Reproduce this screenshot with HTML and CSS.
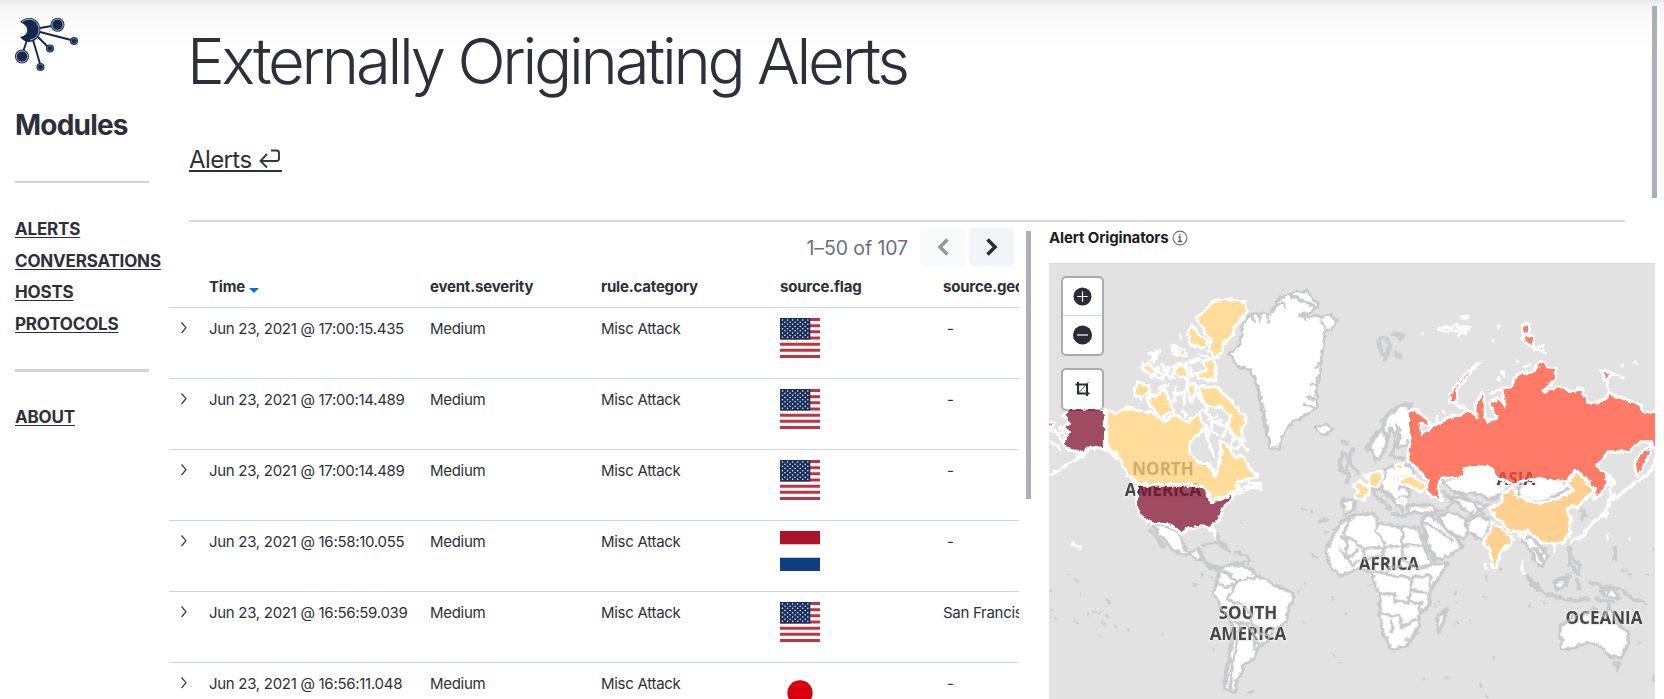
FILE: index.html
```
<!DOCTYPE html>
<html lang="en">
<head>
<meta charset="utf-8">
<title>Externally Originating Alerts</title>
<link rel="stylesheet" href="styles.css">
</head>
<body>
<svg width="0" height="0" class="defs" aria-hidden="true">
  <defs>
    <symbol id="flag-us" viewBox="0 0 120 120">
      <path fill="#fff" d="M0 0h120v120H0z"/>
      <path stroke="#bf3440" stroke-width="9.23" d="M0 4.6h120M0 23.1h120M0 41.5h120M0 60h120M0 78.5h120M0 96.9h120M0 115.4h120"/>
      <path fill="#19305c" d="M0 0h91v64.6H0z"/>
      <path stroke="#fff" stroke-width="4.4" stroke-linecap="round" stroke-dasharray="0 15.2" d="M7.5 6h80M7.5 19h80M7.5 32h80M7.5 45h80M7.5 58h80M15 12.5h65M15 25.5h65M15 38.5h65M15 51.5h65"/>
    </symbol>
    <symbol id="flag-nl" viewBox="0 0 120 120">
      <path fill="#fff" d="M0 0h120v120H0z"/><path fill="#ab1527" d="M0 0h120v40H0z"/><path fill="#0d3e80" d="M0 80h120v40H0z"/>
    </symbol>
    <symbol id="flag-jp" viewBox="0 0 120 120"><circle cx="60" cy="60" r="38" fill="#d8000f"/></symbol>
    <symbol id="chev" viewBox="0 0 8 14"><path d="M1.5 1.5 6 6.7 1.5 12" fill="none" stroke="#343741" stroke-width="1.2"/></symbol>
  </defs>
</svg>
<div class="app">
  <nav class="sidebar">
    <svg class="logo" viewBox="0 0 64 56">
      <g stroke="#14284f" stroke-width="1.9" fill="none">
        <path d="m25 11 12-2M25 15l35 9M23 20l11 11M18 23l8 27M12 23l-4 12"/>
      </g>
      <g fill="#14284f">
        <circle cx="42.5" cy="7.7" r="7"/><circle cx="59" cy="24" r="4"/><circle cx="35" cy="31.5" r="4"/><circle cx="25.5" cy="50" r="4"/><circle cx="7" cy="39.5" r="7"/>
        <path d="M5 5C10 0 20-1 24 7c4 9-1 17-9 18-4 0-8-2-10-5 5-1 8-4 7-8 0-3-3-5-7-7z"/>
      </g>
      <g fill="none" stroke="#d9dde5" stroke-width=".8">
        <circle cx="42.5" cy="7.7" r="5.6"/><circle cx="7" cy="39.5" r="5.6"/><path d="M7 5c6-5 13-3 16 3 3 7-1 14-8 15"/>
      </g>
      <g fill="none" stroke="#8f9ab0" stroke-width=".6">
        <circle cx="59" cy="24" r="2.8"/><circle cx="35" cy="31.5" r="2.8"/><circle cx="25.5" cy="50" r="2.8"/>
      </g>
    </svg>
    <h2 class="modules">Modules</h2>
    <div class="rule"></div>
    <ul class="links">
      <li><a>ALERTS</a></li>
      <li><a>CONVERSATIONS</a></li>
      <li><a>HOSTS</a></li>
      <li><a>PROTOCOLS</a></li>
    </ul>
    <div class="rule rule-thick"></div>
    <a class="about">ABOUT</a>
  </nav>
  <main class="main">
    <header class="head">
      <h1 class="title">Externally Originating Alerts</h1>
      <a class="crumb"><span>Alerts</span><svg class="back" viewBox="0 0 22 20"><path d="M12 1.5h5.5a2.5 2.5 0 0 1 2.5 2.5v5.5a2.5 2.5 0 0 1-2.5 2.5H2M8 5 1.5 12 8 18.5" fill="none" stroke="#343741" stroke-width="1.9"/></svg></a>
    </header>
    <div class="panels">
      <section class="table-panel">
        <div class="pager">
          <span class="count">1–50 of 107</span>
          <span class="btn btn-off"><svg viewBox="0 0 12 18"><path d="M10.5 1.5 3 9l7.5 7.5" fill="none" stroke="#98989b" stroke-width="3.6"/></svg></span>
          <span class="btn"><svg viewBox="0 0 12 18"><path d="M1.5 1.5 9 9l-7.5 7.5" fill="none" stroke="#2b2d36" stroke-width="3.6"/></svg></span>
        </div>
        <div class="row thead"><span></span><span>Time <i class="sort"></i></span><span>event.severity</span><span>rule.category</span><span>source.flag</span><span>source.geo</span></div>
        <div class="row"><svg class="chev"><use href="#chev"/></svg><span>Jun 23, 2021 @ 17:00:15.435</span><span>Medium</span><span>Misc Attack</span><svg class="flag"><use href="#flag-us"/></svg><span class="dash">-</span></div>
        <div class="row"><svg class="chev"><use href="#chev"/></svg><span>Jun 23, 2021 @ 17:00:14.489</span><span>Medium</span><span>Misc Attack</span><svg class="flag"><use href="#flag-us"/></svg><span class="dash">-</span></div>
        <div class="row"><svg class="chev"><use href="#chev"/></svg><span>Jun 23, 2021 @ 17:00:14.489</span><span>Medium</span><span>Misc Attack</span><svg class="flag"><use href="#flag-us"/></svg><span class="dash">-</span></div>
        <div class="row"><svg class="chev"><use href="#chev"/></svg><span>Jun 23, 2021 @ 16:58:10.055</span><span>Medium</span><span>Misc Attack</span><svg class="flag"><use href="#flag-nl"/></svg><span class="dash">-</span></div>
        <div class="row"><svg class="chev"><use href="#chev"/></svg><span>Jun 23, 2021 @ 16:56:59.039</span><span>Medium</span><span>Misc Attack</span><svg class="flag"><use href="#flag-us"/></svg><span>San Francisco</span></div>
        <div class="row"><svg class="chev"><use href="#chev"/></svg><span>Jun 23, 2021 @ 16:56:11.048</span><span>Medium</span><span>Misc Attack</span><svg class="flag"><use href="#flag-jp"/></svg><span class="dash">-</span></div>
      </section>
      <div class="gutter"><div class="thumb"></div></div>
      <section class="map-panel">
        <h3 class="map-title">Alert Originators <svg class="info" viewBox="0 0 16 16"><circle cx="8" cy="8" r="6.9" fill="none" stroke="#69707d" stroke-width="1.1"/><path d="M6.3 7H8v4.5M6 11.5h4.2M7.3 4.6h1.3" fill="none" stroke="#535966" stroke-width="1.3"/></svg></h3>
        <div class="map">
          <svg class="world" viewBox="1049 263 606 436">
            <defs>
              <filter id="rough" filterUnits="userSpaceOnUse" x="1040" y="255" width="624" height="450"><feTurbulence type="fractalNoise" baseFrequency=".16" numOctaves="2" seed="4"/><feDisplacementMap in="SourceGraphic" scale="6" xChannelSelector="R" yChannelSelector="G"/></filter>
              <g id="yellow">
                <g transform="translate(1040 220) scale(.33333)">
                  <path d="M525 240 570 238 615 248 622 272 605 300 585 320 578 345 545 375 545 400 525 412 505 388 515 360 495 335 480 315 470 295 500 265ZM455 318 475 340 505 365 485 385 450 370 445 340ZM490 425 515 415 530 440 525 480 480 475 465 460 500 455ZM290 485 328 495 330 515 300 535 283 528ZM330 520 350 530 375 505 388 545 400 575 380 580 365 600 340 565 322 550ZM445 495 465 490 465 520 450 550ZM475 500 530 500 550 520 580 550 622 605 605 630 612 660 590 655 565 620 570 590 545 560 500 560 483 530ZM330 420 350 400 360 395 340 425ZM305 440 325 430 350 460 335 470ZM400 380 430 390 440 410 420 405ZM400 460 420 430 440 450 445 480 420 470Z"/>
                </g>
                <g transform="translate(1048 380) scale(.33333)">
                  <path d="M177 92 210 98 240 80 275 95 310 95 345 125 380 105 420 125 450 100 475 140 450 165 425 185 425 220 450 245 485 255 500 290 510 260 520 215 515 185 535 190 560 230 590 230 600 260 627 285 600 300 570 305 560 325 540 345 510 352 487 368 485 340 450 315 275 312 240 285 215 240 200 215 177 208Z"/>
                  <path d="M565 325 575 320 580 335ZM615 310 635 312 625 318Z"/>
                </g>
                <g transform="translate(1340 459) scale(.33333)">
                  <path d="M42 82 60 66 84 78 87 107 72 122 46 117 52 100ZM88 43 127 34 124 60 117 82 88 82 86 62ZM177 60 220 50 264 85 240 99 205 78 176 77ZM166 16 192 14 187 30 170 28ZM176 121 197 121 192 131 178 131ZM781 172 802 145 799 175ZM806 124 820 108 820 124Z"/>
                </g>
              </g>
              <g id="orange" transform="translate(1340 459) scale(.33333)">
                <path d="M515 83 535 113 600 133 655 118 700 93 680 75 705 38 730 53 760 98 730 128 715 143 695 143 678 155 690 170 690 218 670 250 640 255 605 251 575 223 550 218 510 218 460 168 450 145 485 133 490 103ZM455 188 480 205 500 225 520 240 500 265 476 290 470 325 460 325 445 265 428 245 448 220ZM535 230 565 215 555 237Z"/>
              </g>
              <g id="red" transform="translate(1340 220) scale(.33333)">
                <path d="M203 576 225 568 265 600 270 617 240 612 245 642 300 605 330 590 370 580 385 570 412 592 405 560 425 520 435 530 432 570 440 605 470 595 450 550 470 532 495 555 485 505 515 500 525 465 580 455 605 420 620 440 650 445 645 475 612 515 655 500 700 515 725 505 745 550 795 540 805 520 850 535 905 555 910 578 975 572 975 685 930 680 935 665 905 665 865 695 805 695 770 740 800 765 800 790 785 820 760 838 770 805 755 795 730 768 705 750 690 775 685 785 640 785 600 775 560 780 520 792 490 780 470 775 455 745 420 740 375 745 375 770 305 775 295 800 308 842 260 820 265 785 225 740 200 720 212 660 203 620Z"/>
                <path d="M883 732 905 698 937 673 920 725 890 768ZM418 430 380 456 343 503 328 525 328 548 350 542 354 505 382 470ZM548 313 569 313 569 339 546 344ZM551 348 580 346 584 384 558 370ZM586 385 610 376 610 399ZM783 453 820 460 795 479ZM806 763 820 786 808 790ZM74 764 86 761 83 776Z"/>
                <path transform="translate(-900 0)" d="M16 604 42 608 30 626Z"/>
              </g>
              <g id="maroon" transform="translate(1048 380) scale(.33333)">
                <path d="M266 316 450 316 480 340 487 368 515 360 545 345 564 333 552 357 522 387 514 417 492 437 499 468 485 442 455 440 420 447 400 462 385 447 365 434 310 430 283 414 266 380ZM62 86 172 86 172 207 130 200 110 207 86 240 93 217 56 207 41 185 66 155 38 145 66 130 44 105Z"/>
              </g>
            </defs>
            <rect x="1049" y="263" width="606" height="436" fill="#e2e2e2"/>
            <path d="M1049 263.5h606" stroke="#d5d7da"/>
            <g filter="url(#rough)">
              <g class="land">
                <path transform="translate(1040 220) scale(.33333)" d="M568 400 600 370 608 340 602 320 625 290 655 278 690 285 705 265 712 240 745 225 770 212 800 215 835 255 815 275 780 285 830 290 870 285 890 300 875 330 855 335 850 375 845 420 840 460 830 500 832 560 800 585 770 600 740 625 725 650 718 690 690 680 675 630 665 570 655 500 630 450 590 440ZM822 625 860 612 880 628 850 645Z"/>
                <path class="shore" transform="translate(1040 220) scale(.33333)" d="M632 285 645 305M650 280 662 300M682 285 685 305M705 262 725 245 735 262M750 225 790 245 830 262M780 285 800 300M840 300 855 325M845 420 830 440M832 500 812 490M828 540 800 530M820 560 795 555M640 465 668 560 690 670"/>
                <g id="coast">
                  <g transform="translate(1040 459) scale(.33333)">
                    <path d="M330 195 395 205 425 235 430 265 448 282 475 270 485 290 500 310 520 325 545 325 575 320 620 322 650 350 680 360 700 380 740 390 763 410 745 450 740 490 700 510 680 550 650 570 642 598 610 620 600 650 590 660 585 700 555 690 555 650 565 600 575 550 575 490 545 450 520 400 530 370 540 335 510 325 480 300 450 290 400 275 370 240Z"/>
                    <path d="M545 335 575 350 590 370 620 360 650 355M530 375 555 385 585 375M560 420 580 395 585 370M560 420 600 435 640 470 630 490 660 520 690 530M580 490 620 495 640 520 650 540 640 570M600 490 580 600 570 690M640 545 670 560" fill="none"/>
                  </g>
                  <g transform="translate(1340 459) scale(.33333)">
                    <path d="M15 180 60 165 105 163 112 190 150 200 235 207 250 260 275 315 325 315 300 350 268 400 270 435 235 470 240 500 200 560 155 572 130 520 118 460 122 410 100 370 98 340 60 330 0 350-30 320-40 270-15 220ZM5 123 45 123 42 155 15 165ZM203 140 280 138 288 162 205 160ZM245 180 270 165 350 240 368 262 330 290 285 305 265 265ZM295 175 330 158 375 180 385 215 370 240 330 220ZM380 190 420 170 455 185 430 245 385 220ZM290 480 318 450 310 490 295 518ZM660 500 700 475 750 455 765 445 790 475 808 440 830 490 865 520 862 560 842 597 805 590 780 560 740 550 700 568 665 572ZM822 612 840 610 832 632ZM545 240 570 235 600 260 625 290 610 320 590 315 575 280ZM640 375 675 355 670 385 650 390ZM555 345 605 400 580 385ZM780 395 820 390 840 420 800 410Z"/>
                    <path d="M305 65 370 50 375 25 420 18 455 25 480 62 520 70 490 103 450 125 420 105 340 100ZM530 95 555 60 630 55 695 80 640 115 600 132 545 115ZM320 110 400 170 440 140 370 120ZM85-25 95-60 125-90 150-140 185-160 205-155 215-70 200-40 165-35 165-80 150-90 140-50 120 0 105 5 100-25ZM130 35 170 20 215 20 220 50 175 60 180 85 210 90 205 115 165 120 120 90 125 60Z"/>
                    <path d="M30 175 12 225 70 268 130 265 135 250 105 215 112 190M185 205 188 258 245 260M70 268 75 300 130 290 130 265 170 262 185 262 190 300 230 330 275 320M0 235 20 240 20 300M20 300 55 270M100 335 140 345 150 325 190 320M140 350 215 355 210 395 205 430 165 425 160 405 120 400M215 355 270 350 270 385M120 465 180 470 185 505M155 525 155 480M185 505 210 490 230 480M205 430 240 430 240 465M210 395 260 400M245 185 300 215 340 250M345 95 400 130 430 165M380 190 400 150M575 265 600 290 620 270M805 390 805 415M125-90 145-60 130-20M0 270 20 300 40 320 55 300" fill="none"/>
                  </g>
                </g>
              </g>
              <g class="isles">
                <path transform="translate(1340 220) scale(.33333)" d="M115 360 135 350 150 375 135 420ZM160 340 190 350 175 360M165 400 180 410M125 600 190 550 215 555M20 715 40 690M10 665 20 670M165 645 180 630M82 680 110 640"/>
                <g transform="translate(1340 459) scale(.33333)">
                  <path d="M-60 190-40 180M690 265 695 300 720 320 715 345 690 315ZM560 350 610 400 650 415M640 370 690 350 680 380M650 415 700 425 745 420M710 365 720 390M750 370 780 380 840 390 880 420 910 430M770 420 820 430M825 265 825 300M10-20 30 0 15 40-5 20ZM100 100 150 150M120 90 170 130M150 110 190 155M160 165 200 170M310 100 340 130 320 150M720 140 735 170 725 180M480 330 480 332M420 678 422 680M200 540 202 542M280 165 320 150M250 230 285 300M590 270 610 310M170-100 180-60 150-10 200 0M95 95 125 85M130 55 135 30"/>
                </g>
                <path transform="translate(1040 459) scale(.33333)" d="M490 260 530 250 570 280M530 230 560 265M590 280 620 290 625 310M610 310 560 320M330 215 370 260M900 30 930 50 920 70M925 0 950 40M465 378 470 380M570 600 555 680M625 698 640 700M480 295 510 325"/>
                <path class="specks" transform="translate(1040 459) scale(.33333)" d="M85 345 88 347M105 360 110 362M200 420 210 430M160 458 165 460M180 462 185 462M200 470 204 474M190 490 195 494M225 500 230 502M145 465 146 466M100 480 110 490M35 450 40 452M35 395 36 396M120 405 121 406M45 478 46 480M785 147 800 152M815 158 816 160M815 288 828 292M855 220 865 218M880 210 890 206M605 192 606 193M485 345 486 346M515 355 516 356M792 372 793 373M775 395 776 396M875 417 876 418M920 462 921 463M792 488 793 489M370 525 371 526M265 510 266 511M182 530 183 531M520 567 521 567M882 590 883 591M898 612 899 613M340 273 341 274"/>
                <path class="specks" transform="translate(1340 459) scale(.33333)" d="M285 440 286 441M297 425 297 426M347 400 347 405M350 432 351 433M347 492 358 490M387 485 388 486M436 415 437 416M567 438 568 439M612 432 613 433M252 658 250 661M316 654 328 657M462 595 462 602M440 712 442 710M897 552 898 553M845 332 860 335M870 345 872 346M940 270 940 272M920 345 921 346M442 350 442 366M940 650 941 665M20 462 21 463M85 380 90 375"/>
              </g>
            </g>
            <g fill="#fff"><use href="#yellow"/><use href="#orange"/><use href="#red"/><use href="#maroon"/></g>
            <g class="labels">
              <text x="1163" y="474.5">NORTH</text><text x="1163" y="496">AMERICA</text>
              <text x="1248" y="618.5">SOUTH</text><text x="1248" y="639.5">AMERICA</text>
              <text x="1389" y="570">AFRICA</text><text x="1516" y="484.5">ASIA</text><text x="1604" y="624">OCEANIA</text>
            </g>
            <g class="borders" filter="url(#rough)"><use href="#coast"/></g>
            <g filter="url(#rough)">
              <g class="dust">
                <path transform="translate(1040 220) scale(.33333)" d="M330 400 360 390 350 410ZM310 430 345 450 340 475ZM350 445 375 470 390 440M395 375 430 390 430 410 400 400ZM400 440 420 430 425 470M435 425 445 480M420 345 425 355M440 430 480 420M460 460 490 480 525 470M400 520 430 520M440 490 430 550M470 520 490 550M360 500 385 495M490 570 520 600 500 650M560 610 580 650 570 690M610 660 590 690M25 630 70 640M40 670 60 690M490 320 540 335M500 275 530 290M540 262 555 245M580 262 590 245M480 575 510 560M470 600 500 630M365 435 380 455M385 465 400 475M450 440 455 470M480 400 500 410M350 470 370 478M410 500 400 545M425 570 440 590M500 500 520 530 560 545M530 610 560 620 550 650M505 600 530 590M375 600 380 610"/>
                <path transform="translate(1048 380) scale(.33333)" d="M135 205 115 215 60 255 0 288M180 212 225 245 260 305M190 212 240 260M590 320 640 325M600 310 635 310M570 345 600 325M460 130 480 180 500 230M560 170 600 210M70 490 95 500M20 150 35 175M10 185 30 205M495 130 520 120M480 150 510 165M540 200 570 205"/>
                <path transform="translate(1340 220) scale(.33333)" d="M295 330 325 340 350 310 370 340 390 320M300 322 330 325M345 335 375 325M355 345 370 320M360 290 385 292M474 320 476 322M455 361 460 361M545 340 545 355M610 399 620 399M530 425 532 425M555 440 570 435M490 450 490 470M475 475 477 480M820 460 850 475M800 480 805 510M845 436 847 436M885 426 886 426M450 520 480 510M310 575 312 577M290 590 290 600M335 545 385 572M420 605 440 610M245 343 246 343"/>
                <path transform="translate(1340 459) scale(.33333)" d="M945 0 935 35 880 75 825 120M815 70 810 110 800 170 770 180 745 205 725 235 690 245M785 175 755 190M640 258 642 275M545 300 545 330 555 345M435 315 438 330M803 240 804 230M870 240 871 241"/>
                <path transform="translate(1040 459) scale(.33333)" d="M95 257 110 258 122 270"/>
              </g>
              <g class="fills"><use href="#yellow" fill="#ffd078"/><use href="#orange" fill="#ffc06b"/><use href="#red" fill="#ff5036"/><use href="#maroon" fill="#7e0e2e"/></g>
              <g class="outline"><use href="#yellow"/><use href="#orange"/><use href="#red"/><use href="#maroon"/></g>
            </g>
          </svg>
          <div class="controls">
            <div class="ctl">
              <svg viewBox="0 0 20 20"><circle cx="10" cy="10" r="9.5" fill="#2b2d36"/><path d="M4.5 10h11M10 4.5v11" stroke="#fff" stroke-width="1.2"/></svg>
              <svg viewBox="0 0 20 20"><circle cx="10" cy="10" r="9.5" fill="#2b2d36"/><path d="M4.5 10h11" stroke="#fff" stroke-width="1.2"/></svg>
            </div>
            <div class="ctl ctl-one">
              <svg viewBox="0 0 20 20"><path d="M3 5.5h11.5V17M5.5 3v11.5H17" fill="none" stroke="#2b2d36" stroke-width="2.1"/><path d="m6 14 10-11" stroke="#2b2d36" stroke-width=".8"/></svg>
            </div>
          </div>
        </div>
      </section>
    </div>
  </main>
  <div class="page-thumb"></div>
</div>
</body>
</html>
```
FILE: styles.css
```
* { box-sizing: border-box; }
body { margin: 0; font-family: Inter, "Liberation Sans", sans-serif; color: #2d2f39; background: #fff; }
.defs { position: absolute; }
.app { position: relative; display: flex; width: 1664px; height: 699px; overflow: hidden; background: linear-gradient(#e6e6e6 0, #f3f3f3 4px, #f9f9f9 14px, #fdfdfd 36px, #fff 50px); }
.sidebar { flex: none; width: 169px; padding: 17px 0 0 15px; }
.logo { display: block; width: 64px; height: 56px; overflow: visible; }
.modules { margin: 32px 0 0; font-size: 28px; line-height: 40px; font-weight: 650; letter-spacing: -.8px; }
.rule { width: 134px; height: 2px; margin-top: 36px; background: #d3d3d3; }
.links { list-style: none; margin: 30px 0 0; padding: 0; }
.links li, .about { display: block; height: 31.7px; line-height: 32px; font-size: 17px; font-weight: 700; letter-spacing: -.18px; white-space: nowrap; }
.links a, .about { text-decoration: underline; text-decoration-thickness: 1px; text-underline-offset: 2px; }
.rule-thick { height: 3px; margin-top: 29px; }
.about { margin-top: 29px; }
.main { flex: none; width: 1495px; }
.head { height: 222px; width: 1436px; margin-left: 20px; padding-top: 23px; border-bottom: 2px solid #d8d8d8; }
.title { margin: 0 0 0 -2px; font-size: 63.5px; line-height: 76px; font-weight: 360; letter-spacing: -3.28px; white-space: nowrap; }
.crumb { display: inline-flex; align-items: center; gap: 8px; margin-top: 48px; height: 25px; border-bottom: 2px solid #2d2f39; font-size: 24px; letter-spacing: -.6px; }
.crumb span { line-height: 24px; padding-top: 2px; }
.back { width: 22px; height: 20px; margin: 1px 1px 0 0; }
.panels { display: flex; height: 477px; }
.table-panel { flex: none; width: 850px; overflow: hidden; font-size: 15px; letter-spacing: -.29px; }
.pager { display: flex; align-items: center; height: 50px; padding: 0 5px 0 0; justify-content: flex-end; }
.count { margin: 1px 12px 0 0; font-size: 19.5px; letter-spacing: -.1px; color: #69707d; }
.btn { display: flex; align-items: center; justify-content: center; width: 45px; height: 38px; margin-left: 4px; border-radius: 5px; background: #f1f5f9; }
.btn:nth-child(2) { margin-left: 0; }
.btn-off { background: #f9fafc; }
.btn svg { width: 12px; height: 18px; }
.row { display: grid; grid-template-columns: 40px 221px 171px 179px 163px 200px; width: 974px; height: 71px; padding-top: 10px; border-bottom: 1px solid #cbd6e3; line-height: 22px; white-space: nowrap; }
.thead { height: 36px; padding-top: 4px; font-weight: 700; letter-spacing: -.2px; }
.sort { display: inline-block; margin-left: 1px; border: 5px solid transparent; border-top-color: #0a6be6; border-bottom: 0; vertical-align: -1px; }
.chev { width: 8px; height: 14px; margin: 3px 0 0 11px; }
.flag { width: 40px; height: 40px; }
.dash { padding-left: 4px; }
.gutter { flex: none; width: 30px; padding: 9px 0 0 7px; }
.thumb { width: 5px; height: 268px; background: #abafb8; }
.map-panel { flex: none; width: 606px; }
.map-title { display: flex; align-items: center; gap: 3px; height: 41px; margin: 0; padding-bottom: 10px; font-size: 15px; font-weight: 700; letter-spacing: -.15px; color: #1a1c21; white-space: nowrap; }
.info { width: 16px; height: 16px; }
.map { position: relative; height: 436px; }
.world { display: block; width: 606px; height: 436px; }
.land { fill: #fff; stroke: #c8c9cb; stroke-width: 8px; stroke-linejoin: round; }
.shore { fill: none; stroke-linecap: round; }
.borders { fill: none; stroke: #c8c9cb; stroke-width: 7px; stroke-linejoin: round; opacity: .7; }
.isles path { fill: none; stroke: #cbcccd; stroke-width: 12px; stroke-linecap: round; stroke-linejoin: round; }
.isles .specks { stroke-width: 7px; }
.dust path { fill: none; stroke: #fff; stroke-width: 9px; stroke-linecap: round; stroke-linejoin: round; }
.labels { font: 700 17px "Open Sans", "Noto Sans", sans-serif; fill: #464646; stroke: #eeeeee; stroke-width: 2.5px; paint-order: stroke; text-anchor: middle; }
.fills { opacity: .75; }
.outline { fill: none; stroke: #fff; stroke-width: 8.5px; stroke-linejoin: round; }
.controls { position: absolute; left: 12px; top: 13px; display: grid; gap: 12px; }
.ctl { width: 43px; height: 80px; border: 2px solid rgba(0, 0, 0, .24); border-radius: 5px; background: #fff; background-clip: padding-box; }
.ctl svg { display: block; width: 100%; height: 38px; padding: 9px 0; border-bottom: 1px solid #cbd6e3; }
.ctl svg:last-child { border: 0; }
.ctl-one { height: 43px; }
.page-thumb { position: absolute; left: 1652px; top: 6px; width: 5px; height: 192px; background: #abafb8; }
```
